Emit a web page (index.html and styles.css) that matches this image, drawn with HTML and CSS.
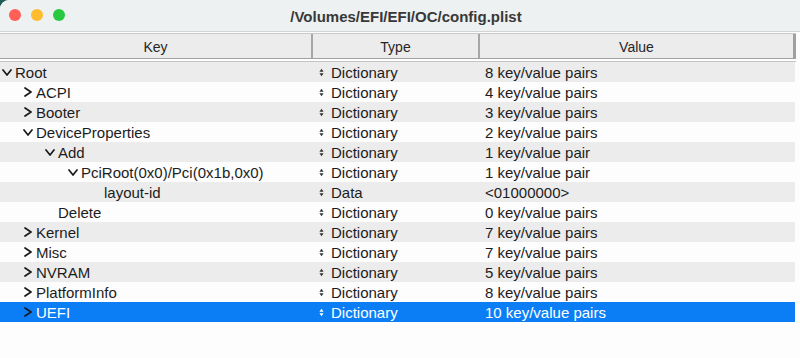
FILE: index.html
```html
<!DOCTYPE html>
<html>
<head>
<meta charset="utf-8">
<link rel="stylesheet" href="styles.css">
</head>
<body>
<div class="window">
  <div class="titlebar">
    <div class="lights">
      <span class="light red"></span>
      <span class="light yellow"></span>
      <span class="light green"></span>
    </div>
    <div class="title">/Volumes/EFI/EFI/OC/config.plist</div>
  </div>
  <div class="table">
    <div class="header">
      <div class="hcell key">Key</div>
      <div class="hcell type">Type</div>
      <div class="hcell value">Value</div>
    </div>
    <div class="rows">
      <div class="row odd">
        <div class="cell key lvl0"><svg class="chev" viewBox="0 0 10 10"><polyline points="1,3 5,8 9,3"/></svg>Root</div>
        <div class="cell type"><svg class="ud" viewBox="0 0 6 10"><path d="M3 0.5 L5.5 4 H0.5 Z M3 9.5 L5.5 6 H0.5 Z"/></svg>Dictionary</div>
        <div class="cell value">8 key/value pairs</div>
      </div>
      <div class="row">
        <div class="cell key lvl1"><svg class="chev" viewBox="0 0 10 10"><polyline points="2,1 8,5 2,9"/></svg>ACPI</div>
        <div class="cell type"><svg class="ud" viewBox="0 0 6 10"><path d="M3 0.5 L5.5 4 H0.5 Z M3 9.5 L5.5 6 H0.5 Z"/></svg>Dictionary</div>
        <div class="cell value">4 key/value pairs</div>
      </div>
      <div class="row odd">
        <div class="cell key lvl1"><svg class="chev" viewBox="0 0 10 10"><polyline points="2,1 8,5 2,9"/></svg>Booter</div>
        <div class="cell type"><svg class="ud" viewBox="0 0 6 10"><path d="M3 0.5 L5.5 4 H0.5 Z M3 9.5 L5.5 6 H0.5 Z"/></svg>Dictionary</div>
        <div class="cell value">3 key/value pairs</div>
      </div>
      <div class="row">
        <div class="cell key lvl1"><svg class="chev" viewBox="0 0 10 10"><polyline points="1,3 5,8 9,3"/></svg>DeviceProperties</div>
        <div class="cell type"><svg class="ud" viewBox="0 0 6 10"><path d="M3 0.5 L5.5 4 H0.5 Z M3 9.5 L5.5 6 H0.5 Z"/></svg>Dictionary</div>
        <div class="cell value">2 key/value pairs</div>
      </div>
      <div class="row odd">
        <div class="cell key lvl2"><svg class="chev" viewBox="0 0 10 10"><polyline points="1,3 5,8 9,3"/></svg>Add</div>
        <div class="cell type"><svg class="ud" viewBox="0 0 6 10"><path d="M3 0.5 L5.5 4 H0.5 Z M3 9.5 L5.5 6 H0.5 Z"/></svg>Dictionary</div>
        <div class="cell value">1 key/value pair</div>
      </div>
      <div class="row">
        <div class="cell key lvl3"><svg class="chev" viewBox="0 0 10 10"><polyline points="1,3 5,8 9,3"/></svg>PciRoot(0x0)/Pci(0x1b,0x0)</div>
        <div class="cell type"><svg class="ud" viewBox="0 0 6 10"><path d="M3 0.5 L5.5 4 H0.5 Z M3 9.5 L5.5 6 H0.5 Z"/></svg>Dictionary</div>
        <div class="cell value">1 key/value pair</div>
      </div>
      <div class="row odd">
        <div class="cell key lvl4"><span class="nochev"></span>layout-id</div>
        <div class="cell type"><svg class="ud" viewBox="0 0 6 10"><path d="M3 0.5 L5.5 4 H0.5 Z M3 9.5 L5.5 6 H0.5 Z"/></svg>Data</div>
        <div class="cell value">&lt;01000000&gt;</div>
      </div>
      <div class="row">
        <div class="cell key lvl2"><span class="nochev"></span>Delete</div>
        <div class="cell type"><svg class="ud" viewBox="0 0 6 10"><path d="M3 0.5 L5.5 4 H0.5 Z M3 9.5 L5.5 6 H0.5 Z"/></svg>Dictionary</div>
        <div class="cell value">0 key/value pairs</div>
      </div>
      <div class="row odd">
        <div class="cell key lvl1"><svg class="chev" viewBox="0 0 10 10"><polyline points="2,1 8,5 2,9"/></svg>Kernel</div>
        <div class="cell type"><svg class="ud" viewBox="0 0 6 10"><path d="M3 0.5 L5.5 4 H0.5 Z M3 9.5 L5.5 6 H0.5 Z"/></svg>Dictionary</div>
        <div class="cell value">7 key/value pairs</div>
      </div>
      <div class="row">
        <div class="cell key lvl1"><svg class="chev" viewBox="0 0 10 10"><polyline points="2,1 8,5 2,9"/></svg>Misc</div>
        <div class="cell type"><svg class="ud" viewBox="0 0 6 10"><path d="M3 0.5 L5.5 4 H0.5 Z M3 9.5 L5.5 6 H0.5 Z"/></svg>Dictionary</div>
        <div class="cell value">7 key/value pairs</div>
      </div>
      <div class="row odd">
        <div class="cell key lvl1"><svg class="chev" viewBox="0 0 10 10"><polyline points="2,1 8,5 2,9"/></svg>NVRAM</div>
        <div class="cell type"><svg class="ud" viewBox="0 0 6 10"><path d="M3 0.5 L5.5 4 H0.5 Z M3 9.5 L5.5 6 H0.5 Z"/></svg>Dictionary</div>
        <div class="cell value">5 key/value pairs</div>
      </div>
      <div class="row">
        <div class="cell key lvl1"><svg class="chev" viewBox="0 0 10 10"><polyline points="2,1 8,5 2,9"/></svg>PlatformInfo</div>
        <div class="cell type"><svg class="ud" viewBox="0 0 6 10"><path d="M3 0.5 L5.5 4 H0.5 Z M3 9.5 L5.5 6 H0.5 Z"/></svg>Dictionary</div>
        <div class="cell value">8 key/value pairs</div>
      </div>
      <div class="row selected">
        <div class="cell key lvl1"><svg class="chev" viewBox="0 0 10 10"><polyline points="2,1 8,5 2,9"/></svg>UEFI</div>
        <div class="cell type"><svg class="ud" viewBox="0 0 6 10"><path d="M3 0.5 L5.5 4 H0.5 Z M3 9.5 L5.5 6 H0.5 Z"/></svg>Dictionary</div>
        <div class="cell value">10 key/value pairs</div>
      </div>
    </div>
  </div>
</div>
</body>
</html>
```

FILE: styles.css
```css
html, body {
  margin: 0;
  padding: 0;
  width: 800px;
  height: 358px;
  overflow: hidden;
  background: #1d5c57;
}

.window {
  width: 800px;
  height: 358px;
  background: #fdfdfd;
  border-top-left-radius: 9px;
  overflow: hidden;
  font-family: "Liberation Sans", Arial, sans-serif;
  color: #1c1c1c;
}

.titlebar {
  position: relative;
  height: 31px;
  background: #edf1f1;
  border-bottom: 1px solid #d2d4d4;
  display: flex;
  align-items: center;
  justify-content: center;
}

.lights {
  position: absolute;
  left: 9px;
  top: 9px;
  display: flex;
  gap: 10px;
}

.light {
  width: 12px;
  height: 12px;
  border-radius: 50%;
}
.light.red { background: #fe5f57; }
.light.yellow { background: #febc2e; }
.light.green { background: #28c840; }

.title {
  font-weight: bold;
  font-size: 15px;
  color: #383838;
  padding-left: 12px;
  padding-top: 1px;
}

.table {
  width: 796px;
  padding-top: 1px;
}

.header {
  display: grid;
  grid-template-columns: 313px 167px 316px;
  height: 24px;
  background: #ececec;
  border-top: 1px solid #c9c9c9;
  border-bottom: 1px solid #9f9f9f;
  box-shadow: 0 2px 0 #ffffff, 0 3px 0 #c3c3c3;
  margin-bottom: 3px;
}

.hcell {
  display: flex;
  align-items: center;
  justify-content: center;
  font-size: 14px;
  color: #262626;
  border-right: 2px solid #a6a6a6;
  padding-top: 1px;
}
.hcell.value {
  border-right: 3px solid #a0a0a0;
}

.rows {
  display: flex;
  flex-direction: column;
  width: 795px;
}

.row {
  display: grid;
  grid-template-columns: 313px 167px 315px;
  height: 20px;
  align-items: center;
  font-size: 15px;
  background: #fdfdfd;
}
.row.odd { background: #ececec; }
.row.selected { background: #0b7ef6; color: #ffffff; }

.cell {
  display: flex;
  align-items: center;
  white-space: nowrap;
}

.chev {
  width: 10px;
  height: 10px;
  margin-right: 3px;
  flex: none;
}
.chev polyline {
  fill: none;
  stroke: #1a1a1a;
  stroke-width: 1.7;
  stroke-linecap: round;
  stroke-linejoin: round;
}
.nochev {
  width: 13px;
  flex: none;
}

.lvl0 { padding-left: 2px; }
.lvl1 { padding-left: 23px; }
.lvl2 { padding-left: 45px; }
.lvl3 { padding-left: 68px; }
.lvl4 { padding-left: 91px; }

.cell.type { padding-left: 6px; }
.ud {
  width: 5px;
  height: 9px;
  margin-right: 7px;
  flex: none;
}
.ud path { fill: #333; }
.selected .ud path { fill: #ffffff; }

.cell.value { padding-left: 5px; }
```
